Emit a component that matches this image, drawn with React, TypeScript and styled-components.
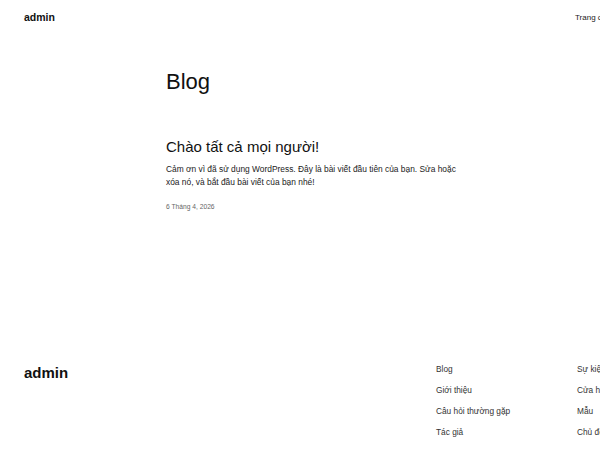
import React from "react";
import styled, { createGlobalStyle } from "styled-components";

const GlobalStyle = createGlobalStyle`
  html, body {
    margin: 0;
    padding: 0;
    background: #fff;
    overflow: hidden;
  }
  body {
    width: 600px;
    height: 450px;
    font-family: "Liberation Sans", Arial, sans-serif;
    color: #111;
  }
`;

const Page = styled.div`
  width: 600px;
  height: 450px;
  display: flex;
  flex-direction: column;
  overflow: hidden;
`;

const Header = styled.header`
  display: grid;
  grid-template-columns: 551px max-content;
  align-items: center;
  height: 35px;
  padding-left: 24px;
`;

const SiteTitle = styled.div<{ $size: number }>`
  font-size: ${(p) => p.$size}px;
  line-height: 1.15;
  font-weight: 700;
  color: #111;
`;

const NavItem = styled.span`
  font-size: 8px;
  color: #222;
  white-space: nowrap;
`;

const Main = styled.main`
  padding-left: 166px;
  padding-top: 34px;
  flex: 1;
`;

const PageTitle = styled.h1`
  margin: 0;
  font-size: 22px;
  font-weight: 400;
  line-height: 1.2;
  color: #111;
`;

const Post = styled.article`
  margin-top: 43px;
  width: 300px;
`;

const PostTitle = styled.h2`
  margin: 0;
  font-size: 15px;
  font-weight: 400;
  line-height: 18px;
  color: #111;
`;

const Excerpt = styled.p`
  margin: 7px 0 0;
  font-size: 8.4px;
  line-height: 13px;
  color: #222;
`;

const PostDate = styled.div`
  margin-top: 14px;
  font-size: 6.7px;
  line-height: 8px;
  color: #666;
`;

const Footer = styled.footer`
  display: grid;
  grid-template-columns: 412px 141px max-content;
  padding: 0 0 13px 24px;
`;

const LinkList = styled.div`
  display: flex;
  flex-direction: column;
  gap: 11px;
`;

const FooterLink = styled.span`
  font-size: 8.3px;
  line-height: 10px;
  color: #333;
  white-space: nowrap;
`;

const col1 = ["Blog", "Giới thiệu", "Câu hỏi thường gặp", "Tác giả"];
const col2 = ["Sự kiện", "Cửa hàng", "Mẫu", "Chủ đề"];

export default function App() {
  return (
    <Page>
      <GlobalStyle />
      <Header>
        <SiteTitle $size={10.5}>admin</SiteTitle>
        <NavItem>Trang chủ</NavItem>
      </Header>
      <Main>
        <PageTitle>Blog</PageTitle>
        <Post>
          <PostTitle>Chào tất cả mọi người!</PostTitle>
          <Excerpt>
            Cảm ơn vì đã sử dụng WordPress. Đây là bài viết đầu tiên của bạn. Sửa hoặc
            xóa nó, và bắt đầu bài viết của bạn nhé!
          </Excerpt>
          <PostDate>6 Tháng 4, 2026</PostDate>
        </Post>
      </Main>
      <Footer>
        <SiteTitle $size={15}>admin</SiteTitle>
        <LinkList>
          {col1.map((l) => (
            <FooterLink key={l}>{l}</FooterLink>
          ))}
        </LinkList>
        <LinkList>
          {col2.map((l) => (
            <FooterLink key={l}>{l}</FooterLink>
          ))}
        </LinkList>
      </Footer>
    </Page>
  );
}
